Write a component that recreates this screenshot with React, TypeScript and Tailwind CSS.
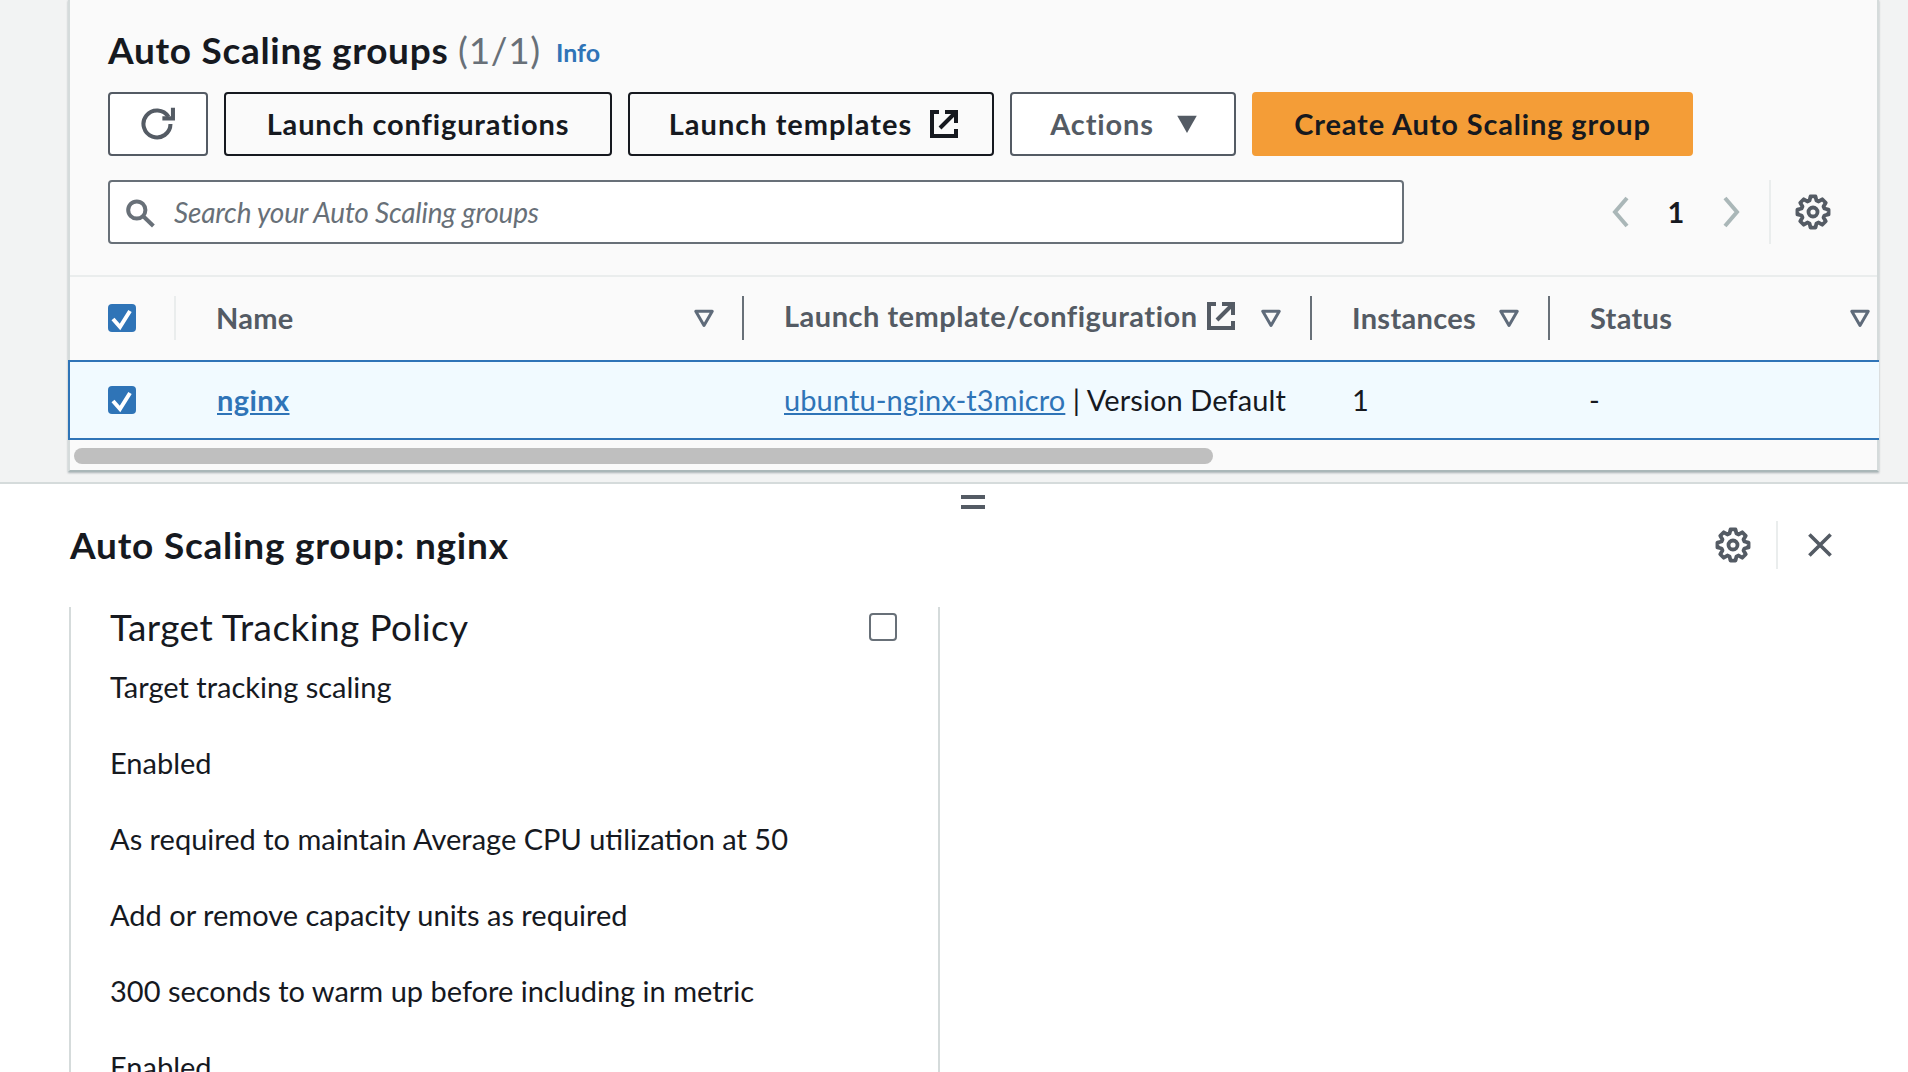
import React from 'react';

const Caret = ({ className = '' }: { className?: string }) => (
  <svg viewBox="0 0 16 16" className={`w-[24px] h-[24px] shrink-0 ${className}`} fill="none" stroke="#5f6b7a" strokeWidth="2">
    <path d="M2.5 3.5h11L8 13z" strokeLinejoin="round" />
  </svg>
);

const External = ({ color }: { color: string }) => (
  <svg viewBox="0 0 16 16" className="w-[32px] h-[32px] shrink-0" fill="none" stroke={color} strokeWidth="2">
    <path d="M5.5 2H2v12h12v-3.5" />
    <path d="M8.5 2H14v5.5M14 2 6 10" />
  </svg>
);

// eight toothed cog outline
const gearPath = (() => {
  const pts: string[] = [];
  for (let i = 0; i < 8; i++) {
    const a = (i * Math.PI) / 4;
    [[-17, 5.3], [-9, 7], [9, 7], [17, 5.3]].forEach(([d, r]) => {
      const t = a + (d * Math.PI) / 180;
      pts.push(`${(8 + r * Math.cos(t)).toFixed(2)} ${(8 + r * Math.sin(t)).toFixed(2)}`);
    });
  }
  return `M${pts.join('L')}z`;
})();

const Gear = () => (
  <svg viewBox="0 0 16 16" className="w-[36px] h-[36px] shrink-0" fill="none" stroke="#545b64" strokeWidth="1.7" strokeLinejoin="round">
    <path d={gearPath} />
    <circle cx="8" cy="8" r="2" />
  </svg>
);

const Check = ({ checked }: { checked?: boolean }) =>
  checked ? (
    <div className="w-[28px] h-[28px] rounded-[4px] bg-[#2f74b7] shrink-0">
      <svg viewBox="0 0 28 28" className="w-[28px] h-[28px]" fill="none" stroke="#fff" strokeWidth="4">
        <path d="m5 15 7 8 10-16" />
      </svg>
    </div>
  ) : (
    <div className="w-[28px] h-[28px] rounded-[4px] border-2 border-[#687078] bg-white shrink-0" />
  );

const btn = 'h-[64px] rounded-[4px] border-2 flex items-center justify-center font-bold text-[29px] tracking-[0.85px] shrink-0';

const policyLines = [
  'Target tracking scaling',
  'Enabled',
  'As required to maintain Average CPU utilization at 50',
  'Add or remove capacity units as required',
  '300 seconds to warm up before including in metric',
  'Enabled',
];

export default function App() {
  return (
    <div className="w-[1908px] h-[1072px] overflow-hidden bg-[#f2f3f3] flex flex-col text-[#16191f] font-['Lato','Noto_Sans',sans-serif]">
      {/* top table panel */}
      <div className="h-[484px] shrink-0 pl-[68px] pr-[29px] border-b-2 border-[#d5dbdb]">
        <div className="h-[472px] bg-[#fafafa] border-l-2 border-r-2 border-[#d5dbdb] border-b-2 border-b-[#aab7b8] shadow-[0_1px_2px_rgba(0,28,36,0.3)]">
          <div className="h-[277px] pl-[38px] pr-[46px] border-b-2 border-[#eaeded]">
            <div className="h-[92px] flex items-center pt-[6px]">
              <h1 className="text-[37px] font-bold leading-none tracking-[0.7px]">
                Auto Scaling groups <span className="font-normal text-[#687078]">(1/1)</span>
              </h1>
              <span className="ml-[15px] mt-[8px] text-[#2f74b7] font-bold text-[25px]">Info</span>
            </div>
            <div className="flex gap-[16px]">
              <div className={`${btn} w-[100px] border-[#545b64] bg-white`}>
                <svg viewBox="0 0 16 16" className="w-[36px] h-[36px] ml-[2px]" fill="none" stroke="#545b64" strokeWidth="1.8">
                  <path d="M9.5 5.5h4.7V.8" />
                  <path d="M12.2 4.8A6 6 0 1 0 13.1 8" />
                </svg>
              </div>
              <div className={`${btn} w-[388px] border-[#16191f]`}>Launch configurations</div>
              <div className={`${btn} w-[366px] border-[#16191f] gap-[16px] pl-[7px]`}>
                <span className="tracking-[1px]">Launch templates</span>
                <External color="#16191f" />
              </div>
              <div className={`${btn} w-[226px] border-[#545b64] bg-white text-[#545b64] gap-[21px] pl-[3px]`}>
                Actions
                <svg viewBox="0 0 16 16" className="w-[24px] h-[24px]" fill="#545b64">
                  <path d="M1.5 2.5h13L8 14z" />
                </svg>
              </div>
              <div className={`${btn} w-[441px] border-[#f49d37] bg-[#f49d37]`}>Create Auto Scaling group</div>
            </div>
            <div className="flex items-center mt-[24px]">
              <div className="w-[1296px] h-[64px] rounded-[4px] border-2 border-[#687078] bg-white flex items-center pl-[16px] gap-[16px] shrink-0">
                <svg viewBox="0 0 16 16" className="w-[32px] h-[32px]" fill="none" stroke="#687078" strokeWidth="2">
                  <circle cx="5.4" cy="7" r="4.3" />
                  <path d="m8.5 10 5.2 5" />
                </svg>
                <span className="italic text-[28px] tracking-[-0.2px] text-[#687078]">Search your Auto Scaling groups</span>
              </div>
              <div className="ml-auto flex items-center h-[64px]">
                <svg viewBox="0 0 18 32" className="w-[18px] h-[32px]" fill="none" stroke="#aab7b8" strokeWidth="4">
                  <path d="M16 2 4 16l12 14" />
                </svg>
                <span className="w-[94px] text-center text-[29px] font-bold">1</span>
                <svg viewBox="0 0 18 32" className="w-[18px] h-[32px]" fill="none" stroke="#aab7b8" strokeWidth="4">
                  <path d="m2 2 12 14L2 30" />
                </svg>
                <div className="w-[2px] h-[64px] bg-[#eaeded] ml-[28px] mr-[24px]" />
                <Gear />
              </div>
            </div>
          </div>

          {/* table head */}
          <div className="h-[83px] pb-[2px] flex items-center text-[29px] font-bold text-[#545b64] tracking-[0.3px]">
            <div className="w-[38px] shrink-0" />
            <Check checked />
            <div className="w-[40px] shrink-0 h-[44px] border-r-2 border-[#eaeded]" />
            <div className="w-[568px] shrink-0 h-[44px] pl-[40px] pr-[26px] flex items-center justify-between border-r-2 border-[#687078]">
              Name
              <Caret />
            </div>
            <div className="w-[568px] shrink-0 h-[44px] pl-[40px] pr-[27px] flex items-center justify-between border-r-2 border-[#687078]">
              <span className="flex items-center gap-[7px] -mt-[3px] tracking-[0.5px]">
                Launch template/configuration
                <External color="#545b64" />
              </span>
              <Caret />
            </div>
            <div className="w-[238px] shrink-0 h-[44px] pl-[40px] pr-[27px] flex items-center justify-between border-r-2 border-[#687078]">
              Instances
              <Caret />
            </div>
            <div className="flex-1 h-[44px] pl-[40px] pr-[5px] flex items-center justify-between">
              Status
              <Caret />
            </div>
          </div>

          {/* selected row */}
          <div className="h-[80px] -ml-[2px] -mr-[2px] flex items-center bg-[#f1faff] border-2 border-r-0 border-[#2f74b7] text-[29px] tracking-[0.1px]">
            <div className="w-[38px] shrink-0" />
            <Check checked />
            <div className="w-[81px] shrink-0" />
            <a className="w-[567px] shrink-0 font-bold text-[#2f74b7] underline tracking-[0.4px]">nginx</a>
            <div className="w-[568px] shrink-0">
              <a className="text-[#2f74b7] underline">ubuntu-nginx-t3micro</a> | Version Default
            </div>
            <div className="w-[237px] shrink-0">1</div>
            <div>-</div>
          </div>

          {/* scrollbar */}
          <div className="h-[29px] pt-[8px] pl-[4px]">
            <div className="w-[1139px] h-[16px] rounded-full bg-[#bfbfbf]" />
          </div>
        </div>
      </div>

      {/* split panel */}
      <div className="relative flex-1 bg-white">
        <div className="absolute left-[961px] top-[11px] w-[24px] h-[14px] flex flex-col justify-between">
          <div className="h-[4px] bg-[#545b64]" />
          <div className="h-[4px] bg-[#545b64]" />
        </div>
        <div className="h-[123px] pl-[70px] pr-[72px] pt-[37px] flex items-start">
          <h2 className="text-[37px] font-bold leading-[48px] tracking-[0.78px]">Auto Scaling group: nginx</h2>
          <div className="ml-auto flex items-center h-[48px]">
            <Gear />
            <div className="w-[2px] h-[48px] bg-[#eaeded] ml-[25px] mr-[26px]" />
            <svg viewBox="0 0 16 16" className="w-[32px] h-[32px]" fill="none" stroke="#545b64" strokeWidth="1.8">
              <path d="m2.7 2.7 10.6 10.6M13.3 2.7 2.7 13.3" />
            </svg>
          </div>
        </div>
        <div className="ml-[69px] w-[871px] h-[465px] border-l-2 border-r-2 border-[#d5dbdb] pl-[39px] pr-[41px]">
          <div className="flex items-center justify-between h-[40px]">
            <div className="text-[37px] leading-[40px] tracking-[0.4px]">Target Tracking Policy</div>
            <Check />
          </div>
          <div className="mt-[20px] flex flex-col gap-[36px]">
            {policyLines.map((line, i) => (
              <div key={i} className="text-[29px] leading-[40px]">{line}</div>
            ))}
          </div>
        </div>
      </div>
    </div>
  );
}
